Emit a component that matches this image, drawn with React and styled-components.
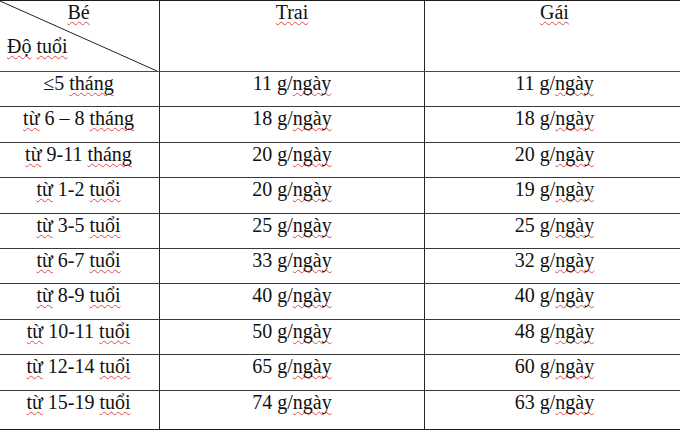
import styled, { createGlobalStyle } from 'styled-components';

const GlobalStyle = createGlobalStyle`
  html, body {
    margin: 0;
    padding: 0;
    background: #ffffff;
    overflow: hidden;
  }
`;

const Sheet = styled.div`
  width: 686px;
  margin-left: -2px;
  border-top: 1px solid #1e1e1e;
  font-family: 'Liberation Serif', 'Times New Roman', serif;
  font-size: 20px;
  line-height: 22px;
  color: #111111;
`;

const Row = styled.div`
  display: grid;
  grid-template-columns: 161px 265px 260px;
  height: ${({ $h }) => $h}px;
  border-bottom: 1px solid ${({ $line }) => $line || '#3a3a3a'};
`;

const Cell = styled.div`
  position: relative;
  text-align: center;
  white-space: nowrap;
  border-left: ${({ $first }) => ($first ? 'none' : '1px solid #262626')};
`;

const CornerCell = styled(Cell)`
  text-align: left;
`;

const CornerTop = styled.div`
  text-align: center;
`;

const CornerBottom = styled.div`
  margin-top: 12px;
  padding-left: 9px;
`;

const Diagonal = styled.svg`
  position: absolute;
  inset: 0;
  width: 100%;
  height: 100%;
  pointer-events: none;
`;

const Spell = styled.span`
  text-decoration: underline wavy #e04848;
  text-decoration-thickness: 1px;
  text-underline-offset: 2px;
  text-decoration-skip-ink: none;
`;

const flagged = new Set(['Bé', 'Độ', 'tuổi', 'tháng', 'Trai', 'Gái', 'ngày', 'từ']);

const Words = ({ text }) =>
  text.split(/(\s+|\/)/).map((part, i) =>
    flagged.has(part) ? <Spell key={i}>{part}</Spell> : <span key={i}>{part}</span>
  );

const rows = [
  ['≤5 tháng', 11, 11],
  ['từ 6 – 8 tháng', 18, 18],
  ['từ 9-11 tháng', 20, 20],
  ['từ 1-2 tuổi', 20, 19],
  ['từ 3-5 tuổi', 25, 25],
  ['từ 6-7 tuổi', 33, 32],
  ['từ 8-9 tuổi', 40, 40],
  ['từ 10-11 tuổi', 50, 48],
  ['từ 12-14 tuổi', 65, 60],
  ['từ 15-19 tuổi', 74, 63],
];

export default function App() {
  return (
    <>
      <GlobalStyle />
      <Sheet>
        <Row $h={70} $line="#4a4a4a">
          <CornerCell $first>
            <CornerTop>
              <Words text="Bé" />
            </CornerTop>
            <CornerBottom>
              <Words text="Độ tuổi" />
            </CornerBottom>
            <Diagonal viewBox="0 0 161 70" preserveAspectRatio="none">
              <line x1="2" y1="0" x2="159" y2="70" stroke="#222" strokeWidth="1" />
            </Diagonal>
          </CornerCell>
          <Cell>
            <Words text="Trai" />
          </Cell>
          <Cell>
            <Words text="Gái" />
          </Cell>
        </Row>
        {rows.map(([age, boy, girl], i) => (
          <Row key={age} $h={i === rows.length - 1 ? 38.4 : 34.4} $line={i === rows.length - 1 ? '#1e1e1e' : undefined}>
            <Cell $first>
              <Words text={age} />
            </Cell>
            <Cell>
              <Words text={`${boy} g/ngày`} />
            </Cell>
            <Cell>
              <Words text={`${girl} g/ngày`} />
            </Cell>
          </Row>
        ))}
      </Sheet>
    </>
  );
}
